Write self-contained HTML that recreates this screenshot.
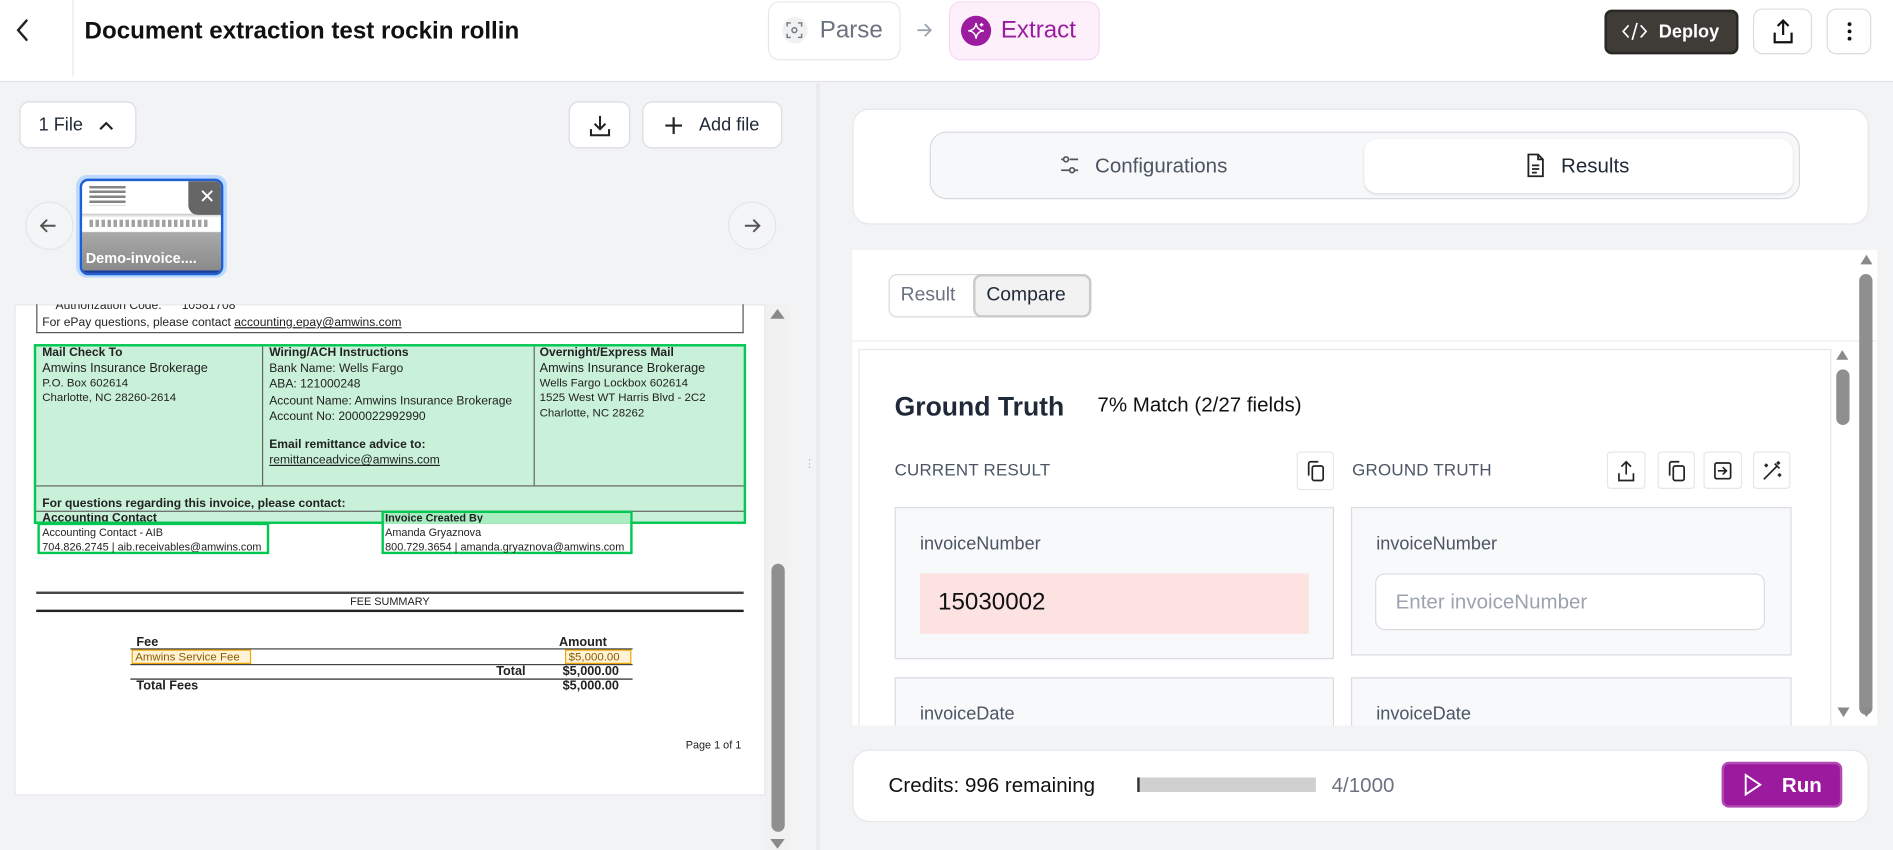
<!DOCTYPE html>
<html><head><meta charset="utf-8"><style>
*{box-sizing:border-box;margin:0;padding:0}
html,body{width:1893px;height:850px;overflow:hidden;background:#f2f3f5}
#w{position:absolute;left:0;top:0;width:1568px;height:704px;transform:scale(1.20727);transform-origin:0 0;font-family:"Liberation Sans",sans-serif;color:#111827;background:#f2f3f5}
.a{position:absolute}
.btn{position:absolute;background:#fff;border:1px solid #d9dce1;border-radius:8px;display:flex;align-items:center;justify-content:center}
.doc{position:absolute;font-size:10px;color:#222;white-space:nowrap;line-height:1}
.b{font-weight:bold}
.u{text-decoration:underline}
svg{display:block}
</style></head><body><div id="w">

<!-- header -->
<div class="a" style="left:0;top:0;width:1568px;height:68px;background:#fff;border-bottom:1px solid #e2e4e8"></div>
<svg class="a" style="left:10px;top:14px" width="18" height="22" viewBox="0 0 18 22"><path d="M12 3 L5 11 L12 19" fill="none" stroke="#222" stroke-width="2" stroke-linecap="round"/></svg>
<div class="a" style="left:60px;top:0;width:1px;height:63px;background:#e5e7eb"></div>
<div class="a" style="left:70px;top:15px;font-size:20px;font-weight:600;color:#111">Document extraction test rockin rollin</div>

<div class="a" style="left:636px;top:1px;width:110px;height:49px;border:1px solid #e5e7eb;border-radius:10px;background:#fff"></div>
<div class="a" style="left:648px;top:14px;width:21px;height:22px;border-radius:50%;background:#f0f1f3"></div>
<svg class="a" style="left:651px;top:18px" width="14" height="14" viewBox="0 0 14 14" fill="none" stroke="#777" stroke-width="1.2"><path d="M1 4V1h3M10 1h3v3M13 10v3h-3M4 13H1v-3"/><circle cx="7" cy="7" r="2"/></svg>
<div class="a" style="left:679px;top:14px;font-size:20px;color:#6b7280">Parse</div>
<svg class="a" style="left:758px;top:18px" width="16" height="14" viewBox="0 0 16 14" fill="none" stroke="#9ca3af" stroke-width="1.5"><path d="M2 7h11M8 2l5 5-5 5"/></svg>
<div class="a" style="left:786px;top:1px;width:125px;height:49px;border:1px solid #f6d9f3;border-radius:10px;background:#fdf0fb"></div>
<div class="a" style="left:796px;top:13px;width:25px;height:25px;border-radius:50%;background:#9b1c9f"></div>
<svg class="a" style="left:800px;top:17px" width="17" height="17" viewBox="0 0 17 17" fill="none" stroke="#fff" stroke-width="1.2"><path d="M8.5 2 Q9 8 15 8.5 Q9 9 8.5 15 Q8 9 2 8.5 Q8 8 8.5 2Z"/><path d="M13 2v3M11.5 3.5h3"/></svg>
<div class="a" style="left:829px;top:14px;font-size:20px;color:#9b1c9f">Extract</div>

<div class="a" style="left:1329px;top:8px;width:111px;height:37px;border-radius:6px;background:#3f3c38;border:2px solid #2a2825"></div>
<svg class="a" style="left:1343px;top:17px" width="22" height="18" viewBox="0 0 22 18" fill="none" stroke="#fff" stroke-width="1.4"><path d="M6 4L1.5 9 6 14M16 4l4.5 5L16 14M13 2L9 16"/></svg>
<div class="a" style="left:1374px;top:18px;font-size:15px;color:#fff;font-weight:600">Deploy</div>
<div class="btn" style="left:1452px;top:7px;width:49px;height:38px"><svg width="18" height="22" viewBox="0 0 18 22" fill="none" stroke="#111" stroke-width="1.8"><path d="M9 14V2M4.5 6.5L9 2l4.5 4.5M2 12v8h14v-8"/></svg></div>
<div class="btn" style="left:1513px;top:7px;width:37px;height:38px"><svg width="4" height="16" viewBox="0 0 4 16"><circle cx="2" cy="2" r="1.6" fill="#111"/><circle cx="2" cy="8" r="1.6" fill="#111"/><circle cx="2" cy="14" r="1.6" fill="#111"/></svg></div>

<!-- left panel -->
<div class="a" style="left:676px;top:69px;width:3px;height:635px;background:#e9eaee"></div>
<div class="a" style="left:666px;top:382px;color:#bbb;font-size:9px;line-height:4px">⋮</div>
<div class="btn" style="left:16px;top:84px;width:97px;height:39px;justify-content:flex-start;padding-left:15px;font-size:15px;color:#1f2937">1 File<svg style="margin-left:12px" width="14" height="10" viewBox="0 0 14 10" fill="none" stroke="#222" stroke-width="1.8"><path d="M2 8l5-5 5 5"/></svg></div>
<div class="btn" style="left:471px;top:84px;width:51px;height:39px"><svg width="20" height="20" viewBox="0 0 20 20" fill="none" stroke="#222" stroke-width="1.7"><path d="M10 2v11M5.5 8.5L10 13l4.5-4.5M2.5 13v5h15v-5"/></svg></div>
<div class="btn" style="left:532px;top:84px;width:116px;height:39px;font-size:15px;color:#1f2937"><svg style="margin-right:14px" width="14" height="14" viewBox="0 0 14 14" stroke="#222" stroke-width="1.8"><path d="M7 0v14M0 7h14"/></svg>Add file</div>

<div class="a" style="left:21px;top:167px;width:40px;height:40px;border-radius:50%;border:1px solid #e3e5e9;background:#f4f5f7"></div>
<svg class="a" style="left:32px;top:179px" width="16" height="16" viewBox="0 0 16 16" fill="none" stroke="#555" stroke-width="1.6"><path d="M14 8H2M7 3L2 8l5 5"/></svg>
<div class="a" style="left:603px;top:167px;width:40px;height:40px;border-radius:50%;border:1px solid #e3e5e9;background:#f4f5f7"></div>
<svg class="a" style="left:615px;top:179px" width="16" height="16" viewBox="0 0 16 16" fill="none" stroke="#555" stroke-width="1.6"><path d="M2 8h12M9 3l5 5-5 5"/></svg>

<div class="a" style="left:63px;top:145px;width:125px;height:85px;border-radius:9px;background:#bcd9ff"></div>
<div class="a" style="left:66px;top:148px;width:119px;height:80px;border-radius:7px;border:2px solid #1f5fd6;overflow:hidden;background:linear-gradient(#fff 0,#fff 35%,#ccc 36%,#fff 40%,#fff 55%,#aaa 56%,#888 100%)">
 <div class="a" style="left:6px;top:4px;width:30px;height:16px;background:repeating-linear-gradient(#333 0 2px,#fff 2px 4px);opacity:.6"></div>
 <div class="a" style="left:6px;top:32px;width:100px;height:6px;background:repeating-linear-gradient(90deg,#444 0 3px,#fff 3px 5px);opacity:.5"></div>
 <div class="a" style="left:88px;top:0;width:31px;height:28px;background:#666;border-radius:0 0 0 8px;color:#fff;font-size:16px;text-align:center;line-height:28px">✕</div>
 <div class="a" style="left:3px;top:57px;font-size:12px;color:#fff;font-weight:600">Demo-invoice....</div>
 <div class="a" style="left:0;top:74px;width:119px;height:6px;background:#1a3f9c"></div>
</div>

<!-- document -->
<div class="a" style="left:12px;top:252px;width:622px;height:407px;background:#fff;border:1px solid #e5e7eb"></div>
<div class="a" style="left:634px;top:252px;width:20px;height:452px;background:#f1f1f1"></div>
<div class="a" style="left:638px;top:256px;width:0;height:0;border-left:6px solid transparent;border-right:6px solid transparent;border-bottom:8px solid #8a8a8a"></div>
<div class="a" style="left:639px;top:467px;width:11px;height:222px;border-radius:6px;background:#8f8f8f"></div>
<div class="a" style="left:638px;top:695px;width:0;height:0;border-left:6px solid transparent;border-right:6px solid transparent;border-top:8px solid #8a8a8a"></div>

<div class="a" style="left:30px;top:252px;width:586px;height:24px;border:1px solid #555;border-top:none"></div>
<div class="a" style="left:40px;top:252px;width:200px;height:7px;overflow:hidden"><div class="doc" style="left:6px;top:-3px">Authorization Code:&nbsp;&nbsp;&nbsp;&nbsp;&nbsp;&nbsp;10581708</div></div>
<div class="doc" style="left:35px;top:263px">For ePay questions, please contact <span class="u">accounting.epay@amwins.com</span></div>

<div class="a" style="left:28px;top:285px;width:590px;height:149px;background:#c9f0d8;border:2px solid #00c853"></div>
<div class="a" style="left:217px;top:287px;width:1px;height:115px;background:#666"></div>
<div class="a" style="left:442px;top:287px;width:1px;height:115px;background:#666"></div>
<div class="a" style="left:30px;top:402px;width:586px;height:1px;background:#666"></div>
<div class="a" style="left:30px;top:423px;width:586px;height:1px;background:#666"></div>
<div class="doc b" style="left:35px;top:288px">Mail Check To</div>
<div class="doc" style="left:35px;top:300px;font-size:10.5px">Amwins Insurance Brokerage</div>
<div class="doc" style="left:35px;top:313px;font-size:9.5px">P.O. Box 602614</div>
<div class="doc" style="left:35px;top:325px;font-size:9.5px">Charlotte, NC 28260-2614</div>
<div class="doc b" style="left:223px;top:288px">Wiring/ACH Instructions</div>
<div class="doc" style="left:223px;top:301px">Bank Name: Wells Fargo</div>
<div class="doc" style="left:223px;top:314px">ABA: 121000248</div>
<div class="doc" style="left:223px;top:328px">Account Name: Amwins Insurance Brokerage</div>
<div class="doc" style="left:223px;top:341px">Account No: 2000022992990</div>
<div class="doc b" style="left:223px;top:364px">Email remittance advice to:</div>
<div class="doc u" style="left:223px;top:377px">remittanceadvice@amwins.com</div>
<div class="doc b" style="left:447px;top:288px">Overnight/Express Mail</div>
<div class="doc" style="left:447px;top:300px;font-size:10.5px">Amwins Insurance Brokerage</div>
<div class="doc" style="left:447px;top:313px;font-size:9.5px">Wells Fargo Lockbox 602614</div>
<div class="doc" style="left:447px;top:325px;font-size:9.5px">1525 West WT Harris Blvd - 2C2</div>
<div class="doc" style="left:447px;top:338px;font-size:9.5px">Charlotte, NC 28262</div>
<div class="doc b" style="left:35px;top:413px">For questions regarding this invoice, please contact:</div>
<div class="doc b" style="left:35px;top:425px;height:7px;overflow:hidden">Accounting Contact</div>
<div class="a" style="left:316px;top:423px;width:208px;height:36px;border:2px solid #00c853"></div>
<div class="a" style="left:318px;top:425px;width:204px;height:9px;background:#a8ecc0"></div>
<div class="doc b" style="left:319px;top:425px;height:8px;overflow:hidden;font-size:9px">Invoice Created By</div>
<div class="a" style="left:31px;top:433px;width:192px;height:26px;border:2px solid #00c853"></div>
<div class="doc" style="left:35px;top:437px;font-size:9px">Accounting Contact - AIB</div>
<div class="doc" style="left:35px;top:449px;font-size:9px">704.826.2745 | aib.receivables@amwins.com</div>
<div class="doc" style="left:319px;top:437px;font-size:9px">Amanda Gryaznova</div>
<div class="doc" style="left:319px;top:449px;font-size:9px">800.729.3654 | amanda.gryaznova@amwins.com</div>

<div class="a" style="left:30px;top:490px;width:586px;height:2px;background:#444"></div>
<div class="a" style="left:30px;top:505px;width:586px;height:2px;background:#222"></div>
<div class="doc" style="left:290px;top:494px;font-size:9px">FEE SUMMARY</div>
<div class="doc b" style="left:113px;top:527px;font-size:10.5px">Fee</div>
<div class="doc b" style="left:463px;top:527px;font-size:10.5px">Amount</div>
<div class="a" style="left:108px;top:537px;width:416px;height:1px;background:#444"></div>
<div class="a" style="left:109px;top:538px;width:99px;height:12px;border:1.5px solid #f0a500;background:#fff3d6"></div>
<div class="doc" style="left:112px;top:540px;font-size:9.5px;color:#8a5a00">Amwins Service Fee</div>
<div class="a" style="left:468px;top:538px;width:55px;height:12px;border:1.5px solid #f0a500;background:#fff3d6"></div>
<div class="doc" style="left:471px;top:540px;font-size:9.5px;color:#8a5a00">$5,000.00</div>
<div class="a" style="left:108px;top:550px;width:416px;height:1px;background:#444"></div>
<div class="doc b" style="left:411px;top:551px;font-size:10.5px">Total</div>
<div class="doc b" style="left:466px;top:551px;font-size:10.5px">$5,000.00</div>
<div class="a" style="left:108px;top:562px;width:416px;height:1px;background:#222"></div>
<div class="doc b" style="left:113px;top:563px;font-size:10.5px">Total Fees</div>
<div class="doc b" style="left:466px;top:563px;font-size:10.5px">$5,000.00</div>
<div class="doc" style="left:568px;top:613px;font-size:9px">Page 1 of 1</div>

<!-- right: config card -->
<div class="a" style="left:706px;top:90px;width:842px;height:96px;background:#fff;border:1px solid #e5e7eb;border-radius:14px"></div>
<div class="a" style="left:770px;top:109px;width:721px;height:56px;background:#f7f8fa;border:1px solid #d6d9de;border-radius:14px"></div>
<div class="a" style="left:1130px;top:115px;width:355px;height:45px;background:#fff;border-radius:11px;box-shadow:0 1px 2px rgba(0,0,0,.12)"></div>
<svg class="a" style="left:877px;top:128px" width="18" height="18" viewBox="0 0 18 18" fill="none" stroke="#555" stroke-width="1.4"><circle cx="6" cy="4" r="2"/><path d="M9 4h7M2 4h2"/><circle cx="11" cy="13" r="2"/><path d="M2 13h7M13 13h3"/></svg>
<div class="a" style="left:907px;top:128px;font-size:17px;color:#4b5563">Configurations</div>
<svg class="a" style="left:1264px;top:127px" width="16" height="20" viewBox="0 0 16 20" fill="none" stroke="#222" stroke-width="1.5"><path d="M2 1h8l4 4v14H2z M10 1v4h4 M5 10h6M5 13h6M5 16h4"/></svg>
<div class="a" style="left:1293px;top:128px;font-size:17px;color:#1f2937">Results</div>

<!-- results panel -->
<div class="a" style="left:706px;top:207px;width:849px;height:394px;background:#fff"></div>
<div class="a" style="left:736px;top:227px;width:168px;height:36px;border:1px solid #d6d9de;border-radius:7px;background:#fff"></div>
<div class="a" style="left:806px;top:227px;width:98px;height:36px;border:2px solid #c8cacd;border-radius:7px;background:#f2f2f3"></div>
<div class="a" style="left:746px;top:236px;font-size:16px;color:#6b7280">Result</div>
<div class="a" style="left:817px;top:236px;font-size:16px;color:#1f2937">Compare</div>
<div class="a" style="left:706px;top:282px;width:849px;height:1px;background:#eceef1"></div>
<div class="a" style="left:1541px;top:211px;width:0;height:0;border-left:5px solid transparent;border-right:5px solid transparent;border-bottom:8px solid #8a8a8a"></div>
<div class="a" style="left:1540px;top:227px;width:11px;height:365px;border-radius:6px;background:#8f8f8f"></div>
<div class="a" style="left:1541px;top:586px;width:0;height:0;border-left:5px solid transparent;border-right:5px solid transparent;border-top:8px solid #8a8a8a"></div>

<div class="a" style="left:711px;top:289px;width:806px;height:312px;border:1px solid #e5e7eb;border-bottom:none;background:#fff"></div>
<div class="a" style="left:1521px;top:290px;width:0;height:0;border-left:5px solid transparent;border-right:5px solid transparent;border-bottom:8px solid #8a8a8a"></div>
<div class="a" style="left:1521px;top:306px;width:11px;height:46px;border-radius:6px;background:#8f8f8f"></div>
<div class="a" style="left:1522px;top:586px;width:0;height:0;border-left:5px solid transparent;border-right:5px solid transparent;border-top:8px solid #8a8a8a"></div>

<div class="a" style="left:741px;top:324px;font-size:22px;font-weight:600;color:#1f2937">Ground Truth</div>
<div class="a" style="left:909px;top:326px;font-size:17px;color:#111">7% Match (2/27 fields)</div>
<div class="a" style="left:741px;top:381px;font-size:14px;color:#4b5563;letter-spacing:.2px">CURRENT RESULT</div>
<div class="a" style="left:1120px;top:381px;font-size:14px;color:#4b5563;letter-spacing:.2px">GROUND TRUTH</div>
<div class="btn" style="left:1074px;top:374px;width:31px;height:32px;border-radius:3px;border-color:#e5e7eb"><svg width="16" height="18" viewBox="0 0 16 18" fill="none" stroke="#222" stroke-width="1.4"><rect x="5" y="5" width="9" height="12" rx="1.5"/><path d="M2 13V3a1.5 1.5 0 0 1 1.5-1.5H10"/></svg></div>
<div class="btn" style="left:1331px;top:374px;width:32px;height:31px;border-radius:3px;border-color:#e5e7eb"><svg width="16" height="18" viewBox="0 0 16 18" fill="none" stroke="#222" stroke-width="1.4"><path d="M8 12V2M4 5.5L8 1.5l4 4M2 11v6h12v-6"/></svg></div>
<div class="btn" style="left:1373px;top:374px;width:31px;height:31px;border-radius:3px;border-color:#e5e7eb"><svg width="16" height="18" viewBox="0 0 16 18" fill="none" stroke="#222" stroke-width="1.4"><rect x="5" y="5" width="9" height="12" rx="1.5"/><path d="M2 13V3a1.5 1.5 0 0 1 1.5-1.5H10"/></svg></div>
<div class="btn" style="left:1411px;top:374px;width:32px;height:31px;border-radius:3px;border-color:#e5e7eb"><svg width="16" height="16" viewBox="0 0 16 16" fill="none" stroke="#222" stroke-width="1.4"><rect x="1.5" y="1.5" width="13" height="13" rx="1.5"/><path d="M4 8h7M8 5l3 3-3 3"/></svg></div>
<div class="btn" style="left:1452px;top:374px;width:31px;height:31px;border-radius:3px;border-color:#e5e7eb"><svg width="18" height="18" viewBox="0 0 18 18" fill="none" stroke="#222" stroke-width="1.4"><path d="M2 16L13 5M11 3l4 4M14 1v3M12.5 2.5h3M4 3v3M2.5 4.5h3M15 11v3M13.5 12.5h3"/></svg></div>

<div class="a" style="left:741px;top:420px;width:364px;height:126px;background:#f8f9fb;border:1px solid #d9dce1"></div>
<div class="a" style="left:762px;top:442px;font-size:15px;color:#4b5563">invoiceNumber</div>
<div class="a" style="left:762px;top:475px;width:322px;height:50px;background:#fde2e2"></div>
<div class="a" style="left:777px;top:488px;font-size:20px;color:#111">15030002</div>
<div class="a" style="left:1119px;top:420px;width:365px;height:123px;background:#f8f9fb;border:1px solid #d9dce1"></div>
<div class="a" style="left:1140px;top:442px;font-size:15px;color:#4b5563">invoiceNumber</div>
<div class="a" style="left:1139px;top:475px;width:323px;height:47px;background:#fff;border:1px solid #d9dce1;border-radius:8px"></div>
<div class="a" style="left:1156px;top:489px;font-size:17px;color:#9ca3af">Enter invoiceNumber</div>
<div class="a" style="left:741px;top:561px;width:364px;height:40px;background:#f8f9fb;border:1px solid #d9dce1;border-bottom:none"></div>
<div class="a" style="left:762px;top:583px;font-size:15px;color:#4b5563">invoiceDate</div>
<div class="a" style="left:1119px;top:561px;width:365px;height:40px;background:#f8f9fb;border:1px solid #d9dce1;border-bottom:none"></div>
<div class="a" style="left:1140px;top:583px;font-size:15px;color:#4b5563">invoiceDate</div>

<!-- bottom -->
<div class="a" style="left:706px;top:621px;width:842px;height:60px;background:#fff;border:1px solid #e5e7eb;border-radius:14px"></div>
<div class="a" style="left:736px;top:641px;font-size:17px;color:#111">Credits: 996 remaining</div>
<div class="a" style="left:942px;top:644px;width:148px;height:12px;background:#d0d0d0;border-left:2px solid #333"></div>
<div class="a" style="left:1103px;top:641px;font-size:17px;color:#6b7280">4/1000</div>
<div class="a" style="left:1426px;top:631px;width:100px;height:38px;border-radius:6px;background:#9b1a9e;border:2px solid #b04bb3"></div>
<svg class="a" style="left:1444px;top:640px" width="16" height="20" viewBox="0 0 16 20" fill="none" stroke="#fff" stroke-width="1.6"><path d="M2 2l12 8-12 8z"/></svg>
<div class="a" style="left:1476px;top:641px;font-size:17px;color:#fff;font-weight:600">Run</div>

</div></body></html>
